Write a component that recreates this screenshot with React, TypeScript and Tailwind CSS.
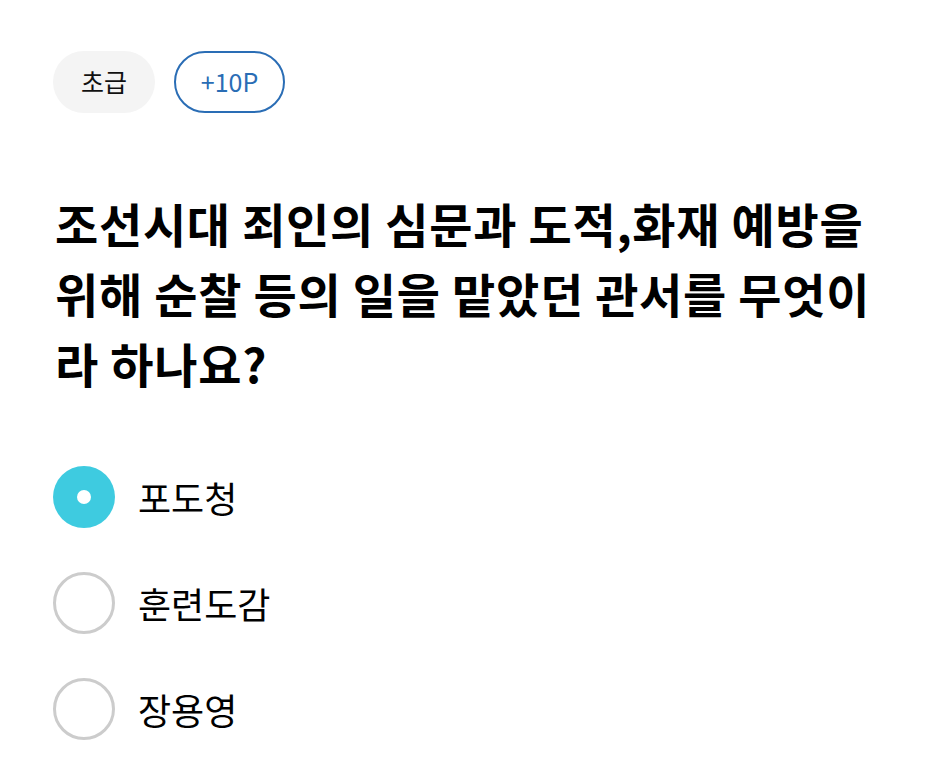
const options = ["포도청", "훈련도감", "장용영"];

export default function App() {
  const selected = 0;
  return (
    <div
      className="min-h-screen w-full bg-white px-[53px] pt-[51px]"
      style={{ fontFamily: '"Noto Sans CJK KR", "Noto Sans", sans-serif' }}
    >
      <div className="flex flex-row gap-[19px]">
        <span className="flex h-[62px] w-[102px] items-center justify-center rounded-full bg-[#f4f4f4] text-[25px] text-[#111]">
          초급
        </span>
        <span className="flex h-[62px] w-[111px] items-center justify-center rounded-full border-2 border-[#2a6db5] text-[25px] text-[#2a6db5]">
          +10P
        </span>
      </div>

      <p className="mt-[75px] pl-[2px] text-[47px] font-bold leading-[70px] tracking-[0.7px] text-black">
        조선시대 죄인의 심문과 도적,화재 예방을 위해 순찰 등의 일을 맡았던 관서를 무엇이라 하나요?
      </p>

      <div className="mt-[68px] flex flex-col gap-[44px]">
        {options.map((opt, i) => (
          <div key={opt} className="flex flex-row items-center gap-[23px]">
            {i === selected ? (
              <span className="flex h-[62px] w-[62px] items-center justify-center rounded-full bg-[#3ecbe0]">
                <span className="h-[14px] w-[14px] rounded-full bg-white" />
              </span>
            ) : (
              <span className="h-[62px] w-[62px] rounded-full border-[3px] border-[#cccccc]" />
            )}
            <span className="text-[36px] text-black">{opt}</span>
          </div>
        ))}
      </div>
    </div>
  );
}
